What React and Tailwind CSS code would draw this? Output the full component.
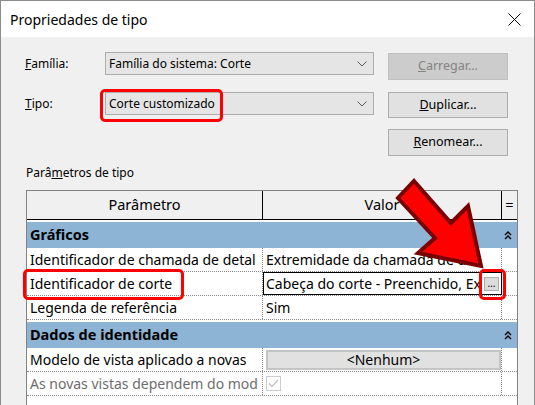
import React from 'react';

const font = "font-['Noto_Sans','Liberation_Sans',sans-serif]";

function Chevron() {
  return (
    <svg width="10" height="6" viewBox="0 0 10 6" className="shrink-0">
      <path d="M0.5 0.5 L5 5 L9.5 0.5" fill="none" stroke="#5a5a5a" strokeWidth="1" />
    </svg>
  );
}

function Collapse() {
  return (
    <svg width="8" height="9" viewBox="0 0 8 9">
      <path d="M1 4 L4 1 L7 4 M1 8 L4 5 L7 8" fill="none" stroke="#000" strokeWidth="1.4" />
    </svg>
  );
}

function Combo({ children }) {
  return (
    <div className="w-[269px] h-[23px] bg-[#e5e5e5] border border-[#acacac] flex items-center justify-between pl-[3px] pr-[6px] text-[12px] text-black">
      <span>{children}</span>
      <Chevron />
    </div>
  );
}

function Button({ children, disabled, className = '' }) {
  return (
    <div
      className={`w-[120px] flex items-center justify-center border text-[12.5px] ${
        disabled ? 'bg-[#cccccc] border-[#bfbfbf] text-[#838383]' : 'bg-[#e1e1e1] border-[#adadad] text-black'
      } ${className}`}
    >
      {children}
    </div>
  );
}

function Section({ title }) {
  return (
    <div className="pt-[2px] bg-white">
      <div className="h-[26px] bg-[#8db3d5] flex items-center justify-between pl-[3px] pr-[5px]">
        <span className="font-bold text-[14.5px]">{title}</span>
        <Collapse />
      </div>
    </div>
  );
}

function Row({ name, value, muted, selected }) {
  return (
    <div className="flex h-[24px] border-b border-dotted border-[#8a8a8a] text-[14px]">
      <div className={`w-[236px] shrink-0 border-r border-dotted border-[#8a8a8a] pl-[3px] flex items-center overflow-hidden whitespace-nowrap ${muted ? 'text-[#6d6d6d]' : 'text-black'}`}>
        {name}
      </div>
      <div className={`w-[239px] shrink-0 flex items-center overflow-hidden whitespace-nowrap ${selected ? 'border border-black pl-[2px] pr-[2px]' : 'border-r border-dotted border-[#8a8a8a] pl-[3px]'}`}>
        {value}
      </div>
      <div className="flex-1" />
    </div>
  );
}

export default function App() {
  return (
    <div className={`relative w-[535px] h-[405px] overflow-hidden bg-[#f0f0f0] border-l border-t border-r border-[#8c8c8c] ${font} text-black`}>
      <div className="h-[36px] bg-white flex items-center justify-between pl-[9px] pr-[13px]">
        <span className="text-[14px]">Propriedades de tipo</span>
        <svg width="13" height="13" viewBox="0 0 13 13">
          <path d="M0.5 0.5 L12.5 12.5 M12.5 0.5 L0.5 12.5" stroke="#000" strokeWidth="1" />
        </svg>
      </div>

      <div className="flex items-start pl-[24px] pt-[15px]">
        <div className="w-[349px]">
          <div className="flex items-center h-[23px]">
            <span className="w-[80px] text-[12px]"><u>F</u>amília:</span>
            <Combo>Família do sistema: Corte</Combo>
          </div>
          <div className="flex items-center h-[23px] mt-[17px]">
            <span className="w-[80px] text-[12px]"><u>T</u>ipo:</span>
            <Combo>Corte customizado</Combo>
          </div>
        </div>
        <div className="ml-[14px] flex flex-col">
          <Button disabled className="mt-[1px] h-[27px]"><span><u>C</u>arregar...</span></Button>
          <Button className="mt-[12px] h-[26px]"><span><u>D</u>uplicar...</span></Button>
          <Button className="mt-[11px] h-[27px]"><span><u>R</u>enomear...</span></Button>
        </div>
      </div>

      <div className="h-[34px] pl-[25px] pt-[8px] text-[12px] leading-[18px]">
        Parâ<u>m</u>etros de tipo
      </div>

      <div className="ml-[25px] w-[492px] h-[220px] bg-white border-l border-r border-t border-[#828282] overflow-hidden">
        <div className="flex h-[29px] bg-[#f0f0f0] border-b border-black text-[14.5px]">
          <div className="w-[236px] shrink-0 border-r border-black flex items-center justify-center">Parâmetro</div>
          <div className="w-[239px] shrink-0 border-r border-black flex items-center justify-center">Valor</div>
          <div className="flex-1 flex items-center justify-center">=</div>
        </div>
        <Section title="Gráficos" />
        <Row name="Identificador de chamada de detal" value="Extremidade da chamada de det" />
        <Row
          name="Identificador de corte"
          selected
          value={
            <div className="flex items-center w-full justify-between">
              <span className="overflow-hidden whitespace-nowrap">Cabeça do corte - Preenchido, Ex</span>
              <div className="w-[15px] h-[14px] shrink-0 bg-[#dcdcdc] border border-[#adadad] flex items-end justify-center text-[10px] leading-[10px] pb-[2px]">…</div>
            </div>
          }
        />
        <Row name="Legenda de referência" value="Sim" />
        <Section title="Dados de identidade" />
        <Row
          name="Modelo de vista aplicado a novas"
          value={
            <div className="w-[235px] h-[20px] bg-[#e1e1e1] border-2 border-[#c4c4c4] flex items-center justify-center">&lt;Nenhum&gt;</div>
          }
        />
        <Row
          name="As novas vistas dependem do mod"
          muted
          value={
            <div className="w-[15px] h-[15px] border border-[#cccccc] flex items-center justify-center">
              <svg width="11" height="9" viewBox="0 0 11 9">
                <path d="M1 4.5 L4 7.5 L10 1" fill="none" stroke="#bdbdbd" strokeWidth="1.2" />
              </svg>
            </div>
          }
        />
      </div>

      <div className="absolute left-[99px] top-[88px] w-[123px] h-[33px] border-[3px] border-[#ff0000] rounded-[5px]" />
      <div className="absolute left-[22px] top-[268px] w-[161px] h-[31px] border-[3px] border-[#ff0000] rounded-[5px]" />
      <div className="absolute left-[478px] top-[268px] w-[27px] h-[31px] border-[3px] border-[#ff0000] rounded-[5px]" />

      <svg className="absolute left-0 top-0" width="535" height="405" viewBox="0 0 535 405">
        <polygon
          points="413,180 450,222 467,205 480,265 417,252 434,237 397,197"
          fill="#ff0000"
          stroke="#7a0000"
          strokeWidth="4"
          strokeLinejoin="miter"
        />
      </svg>
    </div>
  );
}
